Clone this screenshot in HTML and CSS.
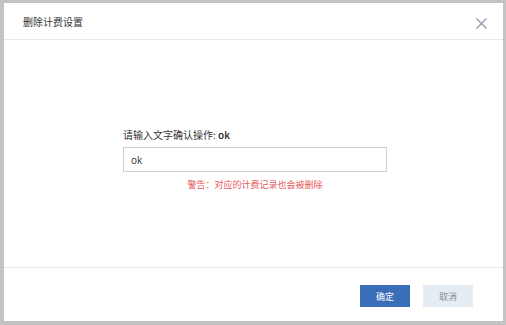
FILE: index.html
```html
<!DOCTYPE html>
<html lang="zh-CN">
<head>
  <meta charset="UTF-8" />
  <title>删除计费设置</title>
  <link rel="stylesheet" href="styles.css">
</head>
<body>

  <div class="dialog">
    <div class="dialog_header">
      <div class="dialog_title">删除计费设置</div>
      <span class="close_btn">
        <svg width="11" height="11" viewBox="0 0 11 11">
          <path d="M0.5 0.5 L10.5 10.5 M10.5 0.5 L0.5 10.5" stroke="#8c9cb2" stroke-width="1.3" fill="none" />
        </svg>
      </span>
    </div>

    <div class="dialog_body">
      <div class="confirm_box">
        <div class="confirm_label">请输入文字确认操作: <span class="keyword">ok</span></div>
        <input type="text" class="confirm_input" value="ok" />
        <div class="warning">警告：对应的计费记录也会被删除</div>
      </div>
    </div>

    <div class="dialog_footer">
      <button class="btn btn-primary">确定</button>
      <button class="btn btn-cancel">取消</button>
    </div>
  </div>

</body>
</html>
```

FILE: styles.css
```css
body {
  margin: 0;
  padding: 3px 3px 4px 4px;
  background-color: #c3c3c3;
  font-family: "Noto Sans CJK SC", "Liberation Sans", sans-serif;
  color: #333;
}

.dialog {
  background: white;
  height: 318px;
  display: flex;
  flex-direction: column;
}

.dialog_header {
  height: 36px;
  border-bottom: 1px solid #e6eaef;
  display: flex;
  align-items: center;
  justify-content: space-between;
  padding: 0 16px 0 19px;
}

.dialog_title {
  font-size: 10px;
  color: #333;
  padding-top: 1px;
}

.close_btn {
  display: flex;
  margin-top: 5px;
}

.dialog_body {
  flex: 1;
  padding: 88px 0 0 119px;
}

.confirm_box {
  width: 264px;
}

.confirm_label {
  font-size: 10px;
  line-height: 14px;
  color: #333;
}

.keyword {
  font-family: "Open Sans", sans-serif;
  font-weight: 600;
  color: #222;
}

.confirm_input {
  display: block;
  box-sizing: border-box;
  width: 264px;
  height: 25px;
  margin-top: 5px;
  padding: 0 7px;
  border: 1px solid #cfcfcf;
  font-family: "Open Sans", sans-serif;
  font-size: 10px;
  color: #333;
  outline: none;
}

.warning {
  margin-top: 7px;
  font-size: 9px;
  line-height: 12px;
  text-align: center;
  color: #e8585b;
}

.dialog_footer {
  height: 54px;
  border-top: 1px solid #e6eaef;
  display: flex;
  justify-content: flex-end;
  gap: 13px;
  padding: 17px 30px 0 0;
  box-sizing: border-box;
}

.btn {
  width: 50px;
  height: 22px;
  border: none;
  padding: 0;
  font-family: "Noto Sans CJK SC", sans-serif;
  font-size: 9px;
  cursor: pointer;
}

.btn-primary {
  background-color: #3a6db8;
  color: white;
}

.btn-cancel {
  background-color: #e6ecf3;
  color: #8a8f96;
}
```
